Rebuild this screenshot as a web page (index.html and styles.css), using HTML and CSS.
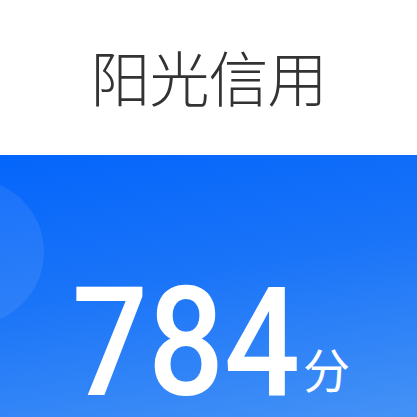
FILE: index.html
```html
<!DOCTYPE html>
<html lang="zh-CN">
<head>
<meta charset="utf-8">
<title>阳光信用</title>
<link rel="stylesheet" href="styles.css">
</head>
<body>
<div class="page">
  <header class="header">
    <h1 class="title">阳光信用</h1>
  </header>
  <section class="panel">
    <div class="bubble"></div>
    <div class="score">
      <span class="num">784</span><span class="unit">分</span>
    </div>
  </section>
</div>
</body>
</html>
```
FILE: styles.css
```css
html, body {
  margin: 0;
  padding: 0;
  background: #ffffff;
}
.page {
  width: 417px;
  height: 417px;
  overflow: hidden;
  display: flex;
  flex-direction: column;
}
.header {
  height: 155px;
  flex: none;
  background: #ffffff;
  display: flex;
  justify-content: center;
  align-items: flex-start;
  padding-top: 46px;
  box-sizing: border-box;
}
.title {
  margin: 0;
  font-family: "Noto Sans CJK SC", "Noto Sans", sans-serif;
  font-weight: 300;
  font-size: 60px;
  line-height: 60px;
  color: #333333;
  letter-spacing: -1px;
}
.panel {
  position: relative;
  flex: 1;
  background: linear-gradient(170deg, #0465fb 0%, #1a74f8 45%, #4592f6 100%);
  overflow: hidden;
}
.bubble {
  position: absolute;
  left: -102px;
  top: 24px;
  width: 146px;
  height: 146px;
  border-radius: 50%;
  background: rgba(255, 255, 255, 0.08);
}
.score {
  position: relative;
  display: flex;
  justify-content: center;
  align-items: baseline;
  padding-top: 128px;
  padding-left: 5px;
  color: #ffffff;
}
.num {
  display: inline-block;
  font-family: Roboto, "Liberation Sans", sans-serif;
  font-weight: 500;
  font-size: 152px;
  line-height: 120px;
  transform: scaleX(0.88);
  transform-origin: left center;
  margin-right: -28px;
}
.unit {
  font-family: "Noto Sans CJK SC", sans-serif;
  font-weight: 400;
  font-size: 47px;
  line-height: 47px;
  transform: translateY(-7px);
}
```
